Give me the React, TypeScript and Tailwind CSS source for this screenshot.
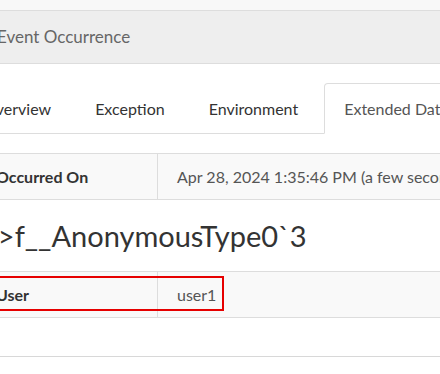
export default function App() {
  const font = { fontFamily: "Lato, 'Noto Sans', sans-serif" };
  return (
    <div className="w-[440px] h-[374px] overflow-hidden bg-white" style={font}>
      <div className="w-[520px] -ml-[15px]">
        <div className="h-[10px] bg-[#f8f8f8]" />
        <div className="h-[54px] bg-[#eeeeee] border-y border-[#dddddd] flex items-center pl-[12px] text-[17px] text-[#666666]">
          Event Occurrence
        </div>
        <div className="pt-[19px]">
          <div className="flex border-b border-[#dddddd] -ml-[23px] h-[51px]">
            {["Overview", "Exception", "Environment"].map((t) => (
              <div
                key={t}
                className="px-[20px] mr-[2px] border border-transparent flex items-center text-[16px] text-[#333333] mb-[-1px]"
              >
                {t}
              </div>
            ))}
            <div className="ml-[3px] px-[19px] border border-[#dddddd] border-b-white bg-white rounded-t-[4px] flex items-center text-[16px] text-[#555555] mb-[-1px]">
              Extended Data
            </div>
          </div>
        </div>
        <div className="mt-[19px] border-t border-[#dddddd]">
          <div className="flex h-[46px] bg-[#f9f9f9] border-b border-[#dddddd] text-[16px]">
            <div className="w-[173px] border-r border-[#dddddd] flex items-center pl-[11px] font-bold text-[#333333]">
              Occurred On
            </div>
            <div className="flex items-center pl-[19px] text-[#555555] whitespace-nowrap">
              Apr 28, 2024 1:35:46 PM (a few seconds ago)
            </div>
          </div>
        </div>
        <div className="h-[71px] flex items-center -ml-[4px] text-[29px] text-[#333333] leading-none">
          &lt;&gt;f__AnonymousType0`3
        </div>
        <div className="relative border-t border-[#dddddd]">
          <div className="flex h-[46px] bg-[#f9f9f9] border-b border-[#dddddd] text-[16px]">
            <div className="w-[173px] border-r border-[#dddddd] flex items-center pl-[11px] font-bold text-[#333333]">
              User
            </div>
            <div className="flex items-center pl-[19px] text-[#555555] whitespace-nowrap">
              user1
            </div>
          </div>
          <div className="absolute left-0 top-[4px] w-[239px] h-[35px] border-2 border-[#e60000]" />
        </div>
        <div className="h-[38px]" />
        <div className="border-t border-[#d8d8d8]" />
      </div>
    </div>
  );
}
